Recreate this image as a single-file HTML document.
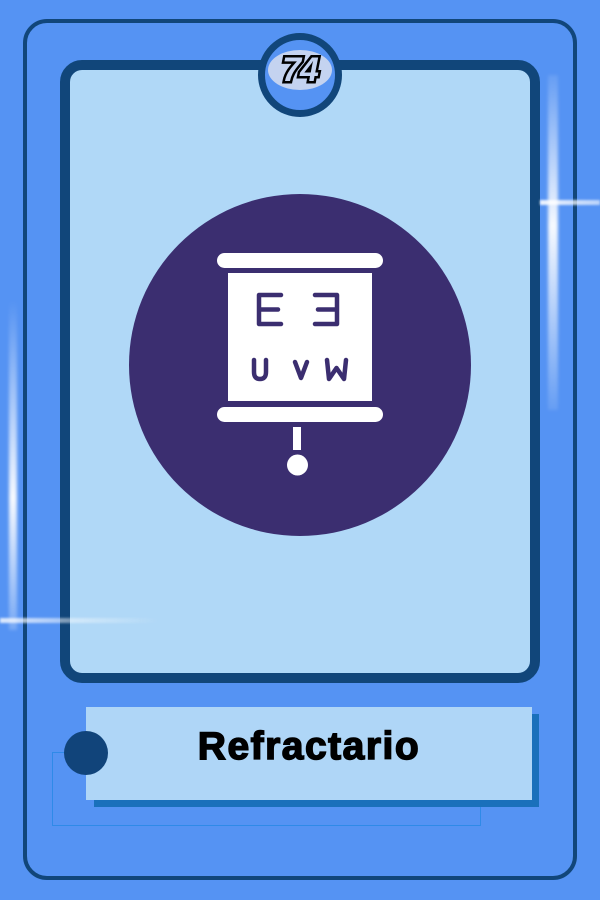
<!DOCTYPE html>
<html><head><meta charset="utf-8"><style>
html,body{margin:0;padding:0;}
body{width:600px;height:900px;background:#5593f3;position:relative;overflow:hidden;font-family:"Liberation Sans",sans-serif;}
.abs{position:absolute;}
</style></head><body>
<div class="abs" style="left:23px;top:19px;width:546px;height:853px;border:4px solid #11467a;border-radius:24px;background:#5593f3;"></div>
<div class="abs" style="left:60px;top:60px;width:460px;height:603px;border:10px solid #11467a;border-radius:22px;background:#b0d8f7;"></div>
<div class="abs" style="left:129px;top:194px;width:342px;height:342px;border-radius:50%;background:#3b2e70;"></div>
<svg class="abs" style="left:0;top:0" width="600" height="900">
  <rect x="217" y="253" width="166" height="15" rx="7.5" fill="#fff"/>
  <rect x="228" y="273" width="144" height="128" fill="#fff"/>
  <rect x="217" y="407" width="166" height="15" rx="7.5" fill="#fff"/>
  <rect x="293" y="427" width="8" height="23" fill="#fff"/>
  <circle cx="297.5" cy="465" r="10.5" fill="#fff"/>
  <g fill="none" stroke="#3b2e70" stroke-width="4.5" stroke-linecap="round" stroke-linejoin="round">
    <path d="M281 295 H259 V324 H281 M259 309.5 H278"/>
    <path d="M315 295 H337 V324 H315 M337 309.5 H318"/>
    <path d="M254 360 V372 Q254 379 260 379 Q266 379 266 372 V360"/>
    <path d="M295 362 L301 378 L307 362"/>
    <path d="M327 360 L329 379 L336.5 368 L344 379 L346 360"/>
  </g>
</svg>
<!-- badge -->
<div class="abs" style="left:258px;top:33px;width:70px;height:70px;border:7px solid #11467a;border-radius:50%;background:#5593f3;overflow:hidden;">
  <div class="abs" style="left:3px;top:10px;width:64px;height:40px;border-radius:50%;background:#c4d3f0;"></div>
  <div class="abs" style="left:0;top:12px;width:70px;text-align:center;font:italic 900 34px 'Liberation Sans',sans-serif;line-height:36px;color:#c4d3f0;-webkit-text-stroke:5px #000;paint-order:stroke fill;letter-spacing:-1px;">74</div>
</div>
<!-- sparkles -->
<div class="abs" style="left:548px;top:75px;width:10px;height:335px;background:linear-gradient(to bottom,rgba(255,255,255,0.1),rgba(255,255,255,0.95) 45%,rgba(255,255,255,0.1));filter:blur(1.5px);"></div>
<div class="abs" style="left:540px;top:200px;width:60px;height:5px;background:linear-gradient(to right,rgba(255,255,255,0.9),rgba(255,255,255,0.6));filter:blur(1px);"></div>
<div class="abs" style="left:9px;top:300px;width:8px;height:330px;background:linear-gradient(to bottom,rgba(255,255,255,0),rgba(255,255,255,0.95) 60%,rgba(255,255,255,0.2));filter:blur(1.5px);"></div>
<div class="abs" style="left:0;top:618px;width:160px;height:5px;background:linear-gradient(to right,rgba(255,255,255,0.8),rgba(255,255,255,0));filter:blur(1px);"></div>
<!-- label -->
<div class="abs" style="left:52px;top:752px;width:427px;height:72px;border:1px solid #2f8ae8;"></div>
<div class="abs" style="left:94px;top:714px;width:445px;height:93px;background:#1a70bb;"></div>
<div class="abs" style="left:86px;top:707px;width:446px;height:93px;background:#afd6f7;"></div>
<div class="abs" style="left:64px;top:731px;width:44px;height:44px;border-radius:50%;background:#11447a;"></div>
<div class="abs" style="left:86px;top:725px;width:446px;text-align:center;font:bold 39px 'Liberation Sans',sans-serif;color:#000;letter-spacing:1.5px;-webkit-text-stroke:1.5px #000;">Refractario</div>
</body></html>
